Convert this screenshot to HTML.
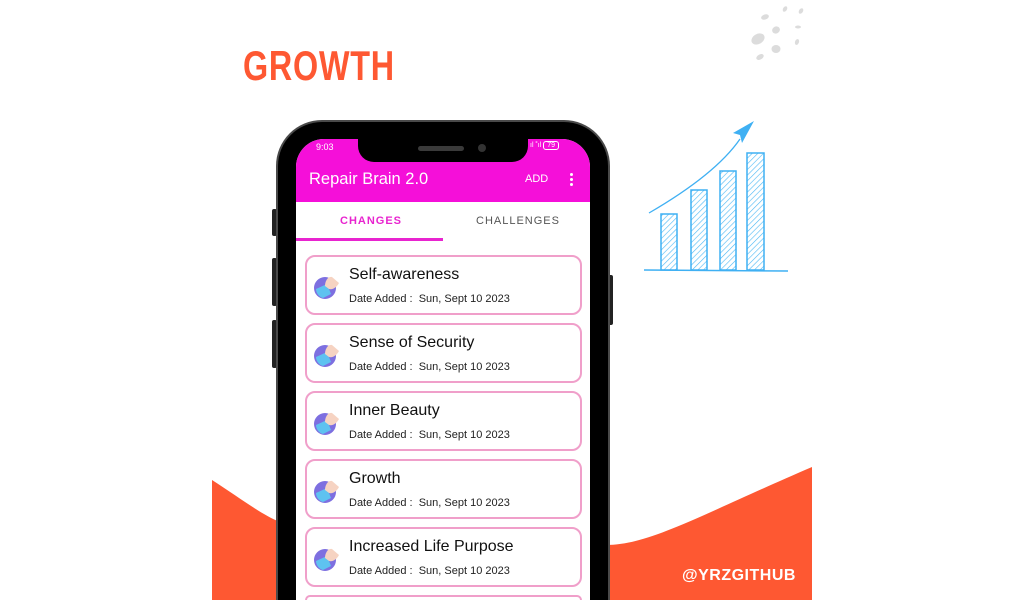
<!DOCTYPE html>
<html><head><meta charset="utf-8"><style>
*{margin:0;padding:0;box-sizing:border-box}
html{width:1024px;height:600px;overflow:hidden}
body{width:1024px;height:600px;overflow:hidden;background:#fff;position:relative;font-family:"Liberation Sans",Roboto,sans-serif}
.abs{position:absolute}
.title{left:243px;top:44px;font-family:"Liberation Sans",sans-serif;font-weight:bold;font-size:42px;color:#fe5832;letter-spacing:1px;transform:scaleX(0.77);transform-origin:left top;line-height:44px}
.phone{left:276px;top:120px;width:334px;height:480px;background:#000;border:2px solid #4a4a4a;border-bottom:0;border-radius:46px 46px 0 0}
.screen{left:296px;top:139px;width:294px;height:461px;background:#fff;border-radius:28px 28px 0 0;overflow:hidden}
.bar{left:0;top:0;width:294px;height:63px;background:#f50fd9}
.notch{left:62px;top:0;width:170px;height:23px;background:#000;border-radius:0 0 16px 16px}
.card{position:absolute;left:9px;width:277px;height:60px;border:2px solid #f09fca;border-radius:10px;background:#fff}
.card .t{position:absolute;left:42px;top:9px;font-size:16px;color:#111}
.card .d{position:absolute;left:42px;top:36px;font-size:11px;color:#222}
.card svg{position:absolute;left:7px;top:17px}
.btn{background:#222;border-radius:2px}
</style></head><body>
<svg class="abs" style="left:0;top:0" width="1024" height="600">
<path d="M212 480 C240 498 262 515 280 522 L280 600 L212 600Z" fill="#fe5832"/>
<path d="M606 545 C650 545 700 515 812 467 L812 600 L606 600Z" fill="#fe5832"/>
<g fill="#dcdcdc">
<ellipse cx="758" cy="39" rx="7" ry="5" transform="rotate(-30 758 39)"/>
<ellipse cx="776" cy="49" rx="4.5" ry="4"/>
<ellipse cx="776" cy="30" rx="4" ry="3.5" transform="rotate(-30 776 30)"/>
<ellipse cx="765" cy="17" rx="4" ry="2.5" transform="rotate(-20 765 17)"/>
<ellipse cx="760" cy="57" rx="4" ry="2.5" transform="rotate(-30 760 57)"/>
<ellipse cx="785" cy="9" rx="2" ry="3" transform="rotate(30 785 9)"/>
<ellipse cx="801" cy="11" rx="2" ry="3" transform="rotate(30 801 11)"/>
<ellipse cx="798" cy="27" rx="3" ry="1.5"/>
<ellipse cx="797" cy="42" rx="2" ry="3" transform="rotate(20 797 42)"/>
</g>
<defs><pattern id="h" width="4" height="4" patternUnits="userSpaceOnUse" patternTransform="rotate(45)"><line x1="0" y1="0" x2="0" y2="4" stroke="#4bb8f5" stroke-width="1.2"/></pattern></defs>
<g stroke="#3fb0f3" stroke-width="1.5" fill="url(#h)">
<rect x="661" y="214" width="16" height="56"/>
<rect x="691" y="190" width="16" height="80"/>
<rect x="720" y="171" width="16" height="99"/>
<rect x="747" y="153" width="17" height="117"/>
</g>
<line x1="644" y1="270" x2="788" y2="271" stroke="#3fb0f3" stroke-width="1.5"/>
<path d="M649 213 C680 195 720 168 740 139" stroke="#3fb0f3" stroke-width="1.3" fill="none"/>
<path d="M754 121 L733 133 L740 135 L742 143Z" fill="#3fb0f3"/>
</svg>
<div class="abs title">GROWTH</div>
<div class="abs btn" style="left:272px;top:209px;width:5px;height:27px"></div>
<div class="abs btn" style="left:272px;top:258px;width:5px;height:48px"></div>
<div class="abs btn" style="left:272px;top:320px;width:5px;height:48px"></div>
<div class="abs btn" style="left:608px;top:275px;width:5px;height:50px"></div>
<div class="abs phone"></div>
<div class="abs screen">
 <div class="abs bar"></div>
 <div class="abs" style="left:20px;top:3px;font-size:9px;color:#fff">9:03</div>
 <div class="abs" style="left:234px;top:3px;font-size:7px;color:#fff">ıl ˚ıl <span style="border:1px solid #fff;border-radius:3px;padding:0 3px">79</span></div>
 <div class="abs notch"></div>
 <div class="abs" style="left:122px;top:7px;width:46px;height:5px;background:#3a3a3a;border-radius:3px"></div>
 <div class="abs" style="left:182px;top:5px;width:8px;height:8px;background:#333;border-radius:50%"></div>
 <div class="abs" style="left:13px;top:31px;font-size:16.5px;color:#fff">Repair Brain 2.0</div>
 <div class="abs" style="left:229px;top:34px;font-size:11px;color:#fff">ADD</div>
 <div class="abs" style="left:274px;top:34px;width:3px;height:3px;background:#fff;border-radius:50%;box-shadow:0 5px 0 #fff,0 10px 0 #fff"></div>
 <div class="abs" style="left:44px;top:76px;font-size:11px;color:#e824cf;letter-spacing:1px;font-weight:bold">CHANGES</div>
 <div class="abs" style="left:180px;top:76px;font-size:11px;color:#555;letter-spacing:1px">CHALLENGES</div>
 <div class="abs" style="left:0;top:99px;width:147px;height:3px;background:#e824cf"></div>
 <div class="card" style="top:116px"><svg width="26" height="26" viewBox="0 0 26 26"><circle cx="11" cy="14" r="11" fill="#7d6fe0"/><path d="M2 15 L13 10 L17 20 L9 24 C5 23 2 19 2 15Z" fill="#5ec2f0"/><path d="M11 12 C11 7 14 2 18 3 L25 9 C23 13 19 16 15 15Z" fill="#f6d3c2"/></svg><div class="t">Self-awareness</div><div class="d">Date Added :&nbsp; Sun, Sept 10 2023</div></div>
 <div class="card" style="top:184px"><svg width="26" height="26" viewBox="0 0 26 26"><circle cx="11" cy="14" r="11" fill="#7d6fe0"/><path d="M2 15 L13 10 L17 20 L9 24 C5 23 2 19 2 15Z" fill="#5ec2f0"/><path d="M11 12 C11 7 14 2 18 3 L25 9 C23 13 19 16 15 15Z" fill="#f6d3c2"/></svg><div class="t">Sense of Security</div><div class="d">Date Added :&nbsp; Sun, Sept 10 2023</div></div>
 <div class="card" style="top:252px"><svg width="26" height="26" viewBox="0 0 26 26"><circle cx="11" cy="14" r="11" fill="#7d6fe0"/><path d="M2 15 L13 10 L17 20 L9 24 C5 23 2 19 2 15Z" fill="#5ec2f0"/><path d="M11 12 C11 7 14 2 18 3 L25 9 C23 13 19 16 15 15Z" fill="#f6d3c2"/></svg><div class="t">Inner Beauty</div><div class="d">Date Added :&nbsp; Sun, Sept 10 2023</div></div>
 <div class="card" style="top:320px"><svg width="26" height="26" viewBox="0 0 26 26"><circle cx="11" cy="14" r="11" fill="#7d6fe0"/><path d="M2 15 L13 10 L17 20 L9 24 C5 23 2 19 2 15Z" fill="#5ec2f0"/><path d="M11 12 C11 7 14 2 18 3 L25 9 C23 13 19 16 15 15Z" fill="#f6d3c2"/></svg><div class="t">Growth</div><div class="d">Date Added :&nbsp; Sun, Sept 10 2023</div></div>
 <div class="card" style="top:388px"><svg width="26" height="26" viewBox="0 0 26 26"><circle cx="11" cy="14" r="11" fill="#7d6fe0"/><path d="M2 15 L13 10 L17 20 L9 24 C5 23 2 19 2 15Z" fill="#5ec2f0"/><path d="M11 12 C11 7 14 2 18 3 L25 9 C23 13 19 16 15 15Z" fill="#f6d3c2"/></svg><div class="t">Increased Life Purpose</div><div class="d">Date Added :&nbsp; Sun, Sept 10 2023</div></div>
 <div class="card" style="top:456px;height:5px;border-bottom:0;border-radius:10px 10px 0 0"></div>
</div>
<div class="abs" style="left:682px;top:567px;font-size:16px;font-weight:bold;color:#fff;letter-spacing:0.5px">@YRZGITHUB</div>
</body></html>
